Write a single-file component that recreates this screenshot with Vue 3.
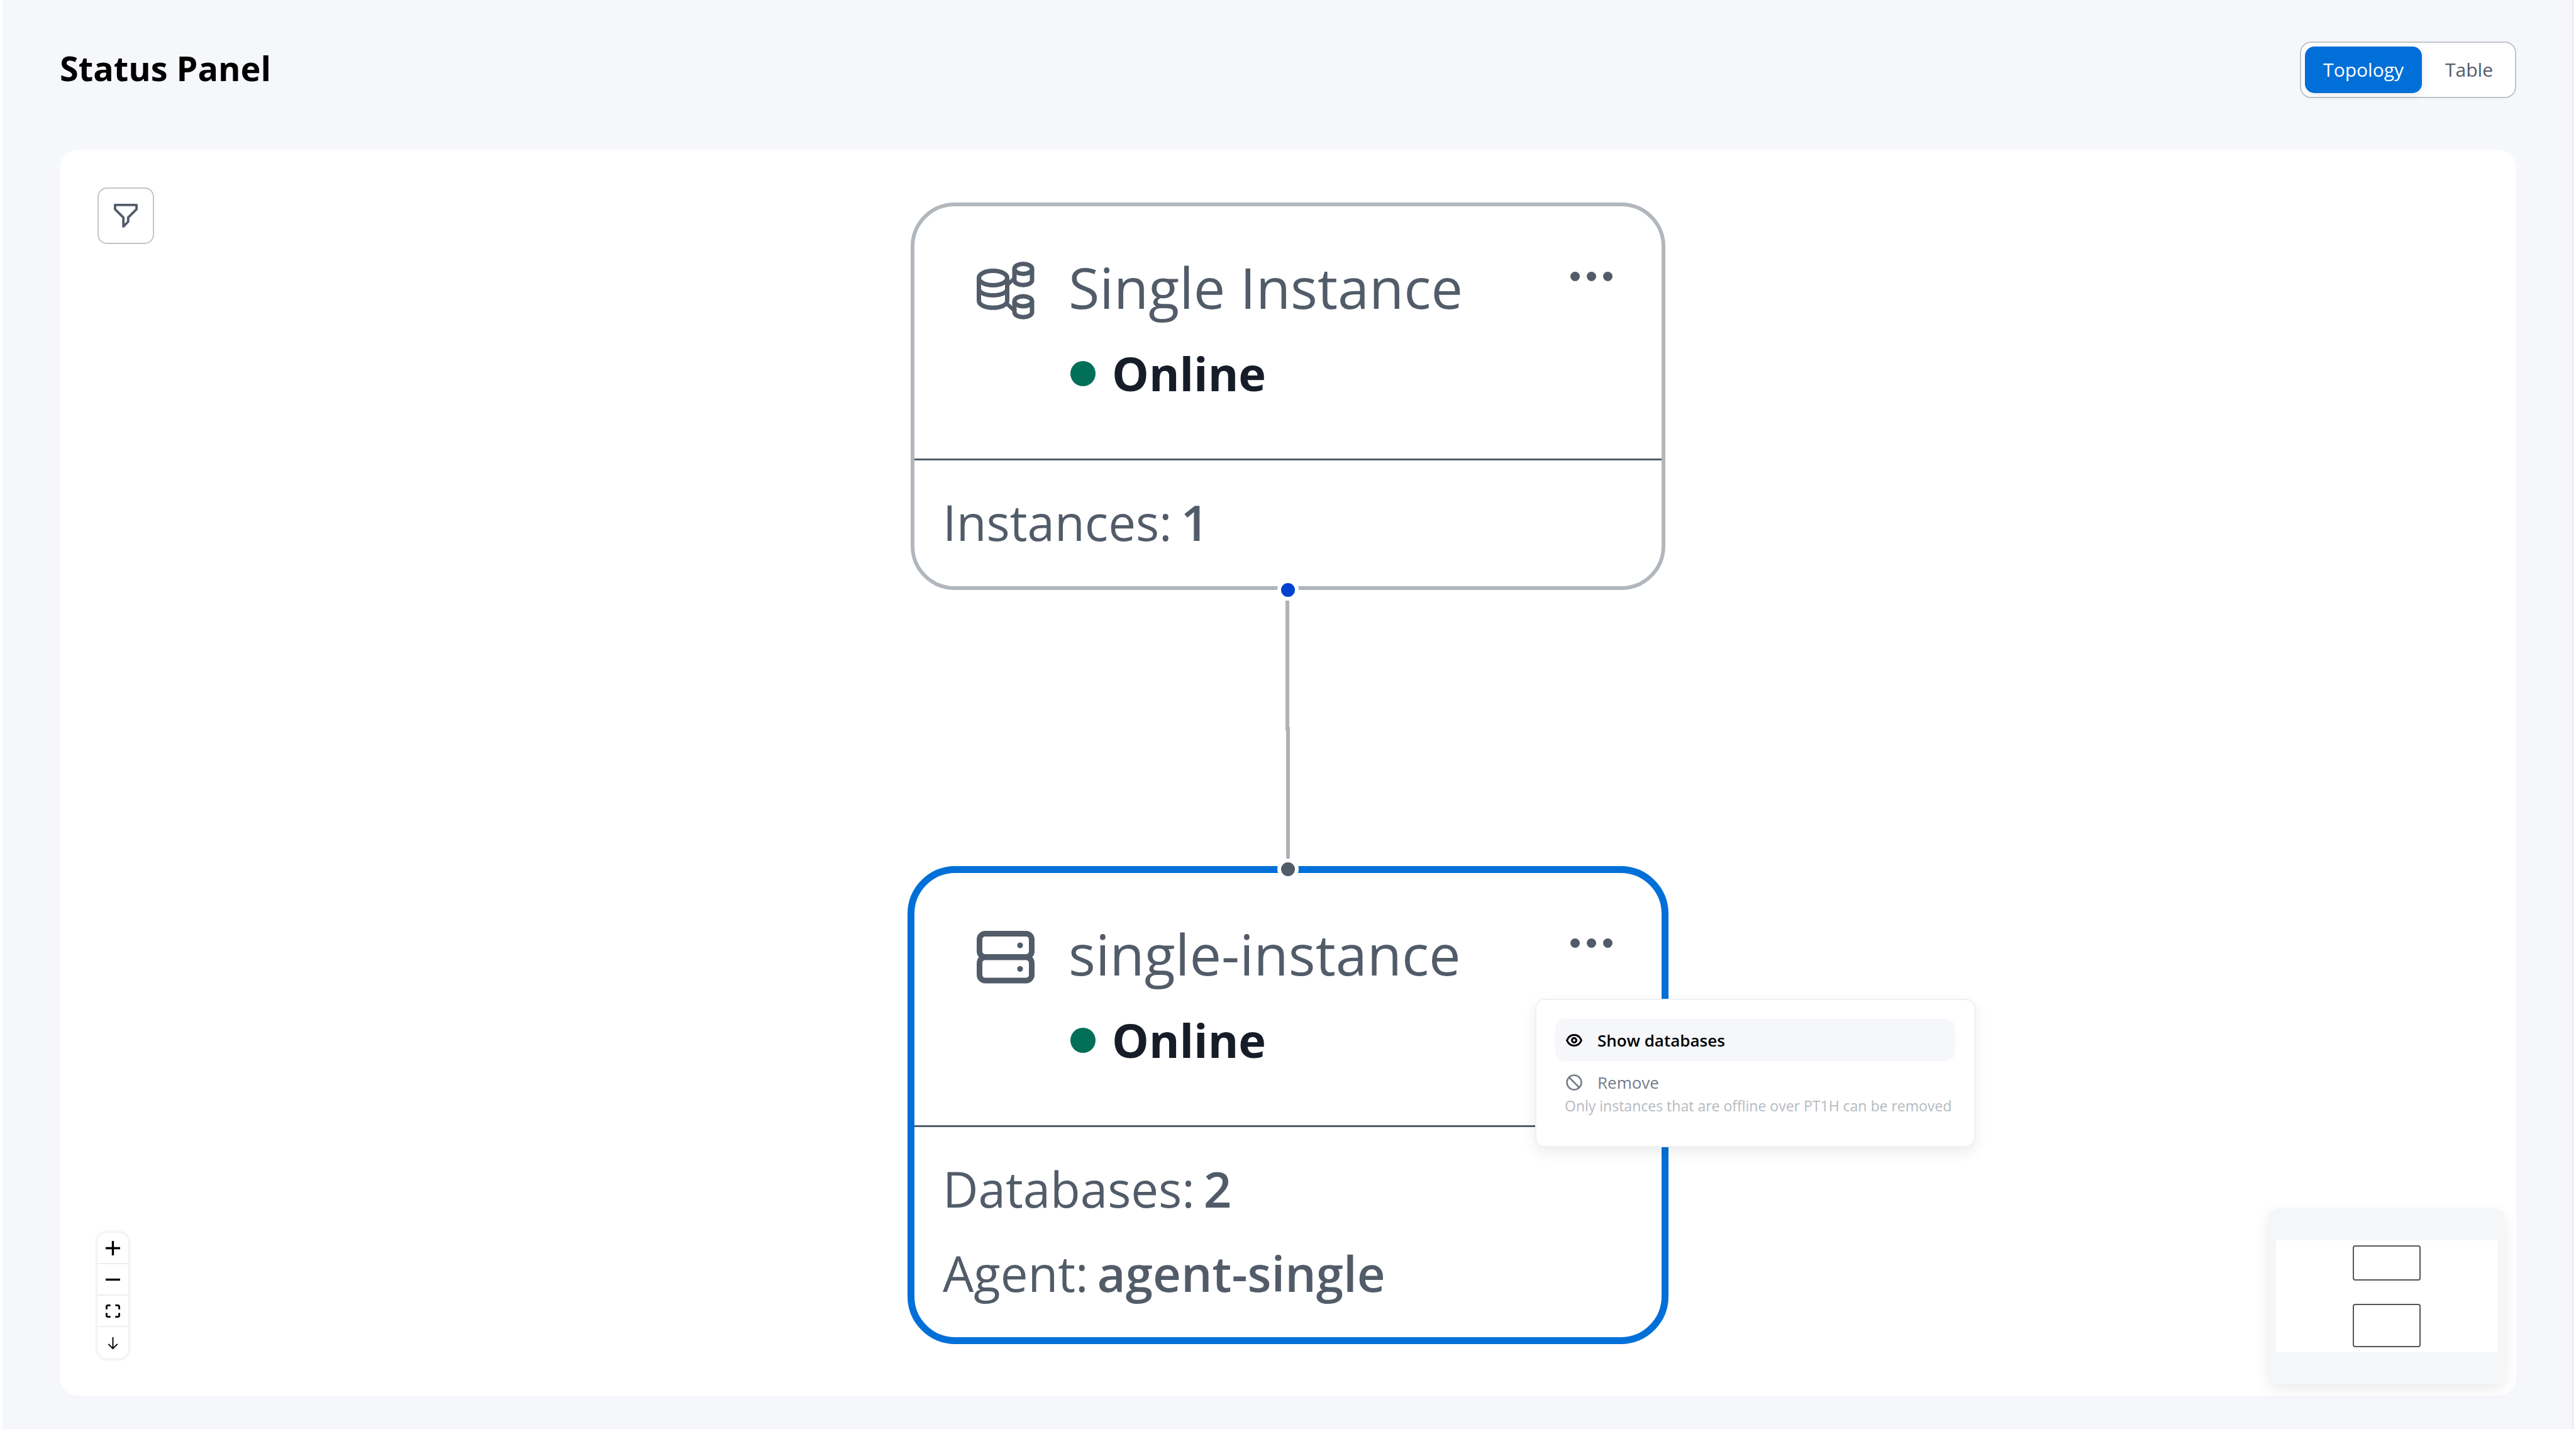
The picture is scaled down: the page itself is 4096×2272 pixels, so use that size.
<script setup>
import { ref } from 'vue'

const view = ref('topology')
const views = [
  { id: 'topology', label: 'Topology' },
  { id: 'table', label: 'Table' },
]

const nodes = [
  {
    id: 'group',
    kind: 'cluster',
    title: 'Single Instance',
    status: 'Online',
    selected: false,
    menuOpen: false,
    details: [{ label: 'Instances:', value: '1' }],
  },
  {
    id: 'instance',
    kind: 'server',
    title: 'single-instance',
    status: 'Online',
    selected: true,
    menuOpen: true,
    details: [
      { label: 'Databases:', value: '2' },
      { label: 'Agent:', value: 'agent-single' },
    ],
  },
]
</script>

<template>
  <div class="page">
    <header class="page-header">
      <h1 class="page-title">Status Panel</h1>
      <div class="toggle" role="group" aria-label="View">
        <button
          v-for="v in views"
          :key="v.id"
          type="button"
          class="toggle-option"
          :class="{ active: view === v.id }"
          @click="view = v.id"
        >{{ v.label }}</button>
      </div>
    </header>

    <main class="panel">
      <button type="button" class="filter-button" aria-label="Filter">
        <svg class="filter-icon" viewBox="0 0 40 40" fill="none" stroke="currentColor" stroke-width="4" stroke-linejoin="round">
          <path d="M2 2H38V9L24 23V30L16 38V23L2 9Z" />
        </svg>
      </button>

      <div class="graph">
        <template v-for="(node, index) in nodes" :key="node.id">
          <svg v-if="index > 0" class="edge" viewBox="0 0 34 444" fill="none" stroke="#b1b1b7" stroke-width="6">
            <path d="M16 0V221H17V444" />
          </svg>
          <article class="node" :class="{ selected: node.selected }">
            <div class="node-head">
              <svg v-if="node.kind === 'cluster'" class="node-icon" viewBox="0 0 92 92" fill="none" stroke="currentColor" stroke-width="7">
                <ellipse cx="26" cy="26" rx="22.500" ry="11.500" />
                <path d="M3.500 26V62C3.500 77 48.500 77 48.500 62V26" />
                <path d="M3.500 43C3.500 57 48.500 57 48.500 43" />
                <ellipse cx="74" cy="11.500" rx="14" ry="8" />
                <path d="M60 11.500V29C60 40 88 40 88 29V11.500" />
                <ellipse cx="74" cy="63" rx="14" ry="8" />
                <path d="M60 63V80C60 91 88 91 88 80V63" />
                <path d="M49 37L60 26M47 66L60 78" stroke-width="6" />
              </svg>
              <svg v-else class="node-icon" viewBox="0 0 92 92" fill="none" stroke="currentColor" stroke-width="9">
                <rect x="4.500" y="8.500" width="83" height="37" rx="9" />
                <rect x="4.500" y="46" width="83" height="37" rx="9" />
                <circle cx="69" cy="27" r="4.600" fill="currentColor" stroke="none" />
                <circle cx="69" cy="64.500" r="4.600" fill="currentColor" stroke="none" />
              </svg>
              <div class="node-main">
                <h2 class="node-title">{{ node.title }}</h2>
                <p class="node-status"><span class="status-dot"></span>{{ node.status }}</p>
              </div>
              <button type="button" class="node-more" aria-label="Actions">
                <span></span><span></span><span></span>
              </button>
            </div>
            <dl class="node-details">
              <div v-for="d in node.details" :key="d.label" class="detail">
                <dt>{{ d.label }}</dt>
                <dd>{{ d.value }}</dd>
              </div>
            </dl>

            <i v-if="index < nodes.length - 1" class="handle source"></i>
            <i v-if="index > 0" class="handle target"></i>

            <div v-if="node.menuOpen" class="menu">
              <button type="button" class="menu-item highlighted">
                <svg class="menu-icon" viewBox="0 0 26 26" fill="none" stroke="currentColor" stroke-width="3">
                  <path d="M1.500 13C4 7 8 4.500 13 4.500S22 7 24.500 13C22 19 18 21.500 13 21.500S4 19 1.500 13Z" stroke-linejoin="round" />
                  <circle cx="13" cy="13" r="3.500" />
                </svg>
                <span>Show databases</span>
              </button>
              <button type="button" class="menu-item disabled" disabled>
                <svg class="menu-icon" viewBox="0 0 26 26" fill="none" stroke="currentColor" stroke-width="2.500">
                  <circle cx="13" cy="13" r="11.500" />
                  <path d="M5 5L21 21" />
                </svg>
                <span>Remove</span>
              </button>
              <p class="menu-hint">Only instances that are offline over PT1H can be removed</p>
            </div>
          </article>
        </template>
      </div>

      <div class="controls">
        <button type="button" aria-label="Zoom in">
          <svg viewBox="0 0 24 24" fill="none" stroke="currentColor" stroke-width="3.500"><path d="M12 0V24M0 12H24" /></svg>
        </button>
        <button type="button" aria-label="Zoom out">
          <svg viewBox="0 0 24 24" fill="none" stroke="currentColor" stroke-width="3.500"><path d="M0 12H24" /></svg>
        </button>
        <button type="button" aria-label="Fit view">
          <svg viewBox="0 0 24 24" fill="none" stroke="currentColor" stroke-width="3"><path d="M8 2.500H4Q1.500 2.500 1.500 5V9M16 2.500H20Q22.500 2.500 22.500 5V9M22.500 15V19Q22.500 21.500 20 21.500H16M8 21.500H4Q1.500 21.500 1.500 19V15" /></svg>
        </button>
        <button type="button" aria-label="Change layout">
          <svg viewBox="0 0 24 24" fill="none" stroke="currentColor" stroke-width="2"><path d="M12 2V21M4.500 13.500L12 21L19.500 13.500" /></svg>
        </button>
      </div>

      <div class="minimap">
        <div class="minimap-view">
          <i class="mini-node"></i>
          <i class="mini-node tall"></i>
        </div>
      </div>
    </main>
  </div>
</template>

<style>
body {
  margin: 0;
  background: #ffffff;
}
</style>

<style scoped>
.page {
  box-sizing: border-box;
  min-height: 100vh;
  margin: 0 4px;
  padding: 66px 89px 53px 91px;
  border-right: 2px solid #e8e8ea;
  background: #f5f7fb;
  color: #525c69;
  font-family: "Open Sans", sans-serif;
  display: flex;
  flex-direction: column;
  gap: 82px;
}

button {
  margin: 0;
  padding: 0;
  border: 0;
  background: none;
  color: inherit;
  font: inherit;
  cursor: pointer;
}

.page-header {
  display: flex;
  align-items: flex-start;
  justify-content: space-between;
}

.page-title {
  margin: 0;
  color: #000000;
  font-size: 54px;
  line-height: 84px;
  font-weight: 700;
}

.toggle {
  box-sizing: border-box;
  height: 90px;
  display: flex;
  gap: 8px;
  padding: 6px;
  border: 2px solid #c1c5cb;
  border-radius: 18px;
  background: #ffffff;
}

.toggle-option {
  padding: 0 29px;
  border-radius: 15px;
  font-size: 30px;
  line-height: 40px;
}

.toggle-option.active {
  background: #0070d8;
  color: #ffffff;
  box-shadow: 2px 4px 14px rgba(0, 0, 0, 0.08);
}

.panel {
  position: relative;
  flex: 1;
  border-radius: 30px;
  background: #ffffff;
}

.filter-button {
  position: absolute;
  top: 60px;
  left: 60px;
  box-sizing: border-box;
  width: 90px;
  height: 90px;
  display: flex;
  align-items: center;
  justify-content: center;
  border: 2px solid #c1c5cb;
  border-radius: 15px;
}

.filter-icon {
  width: 38px;
  height: 38px;
}

.graph {
  padding: 84px 0 78px;
  display: flex;
  flex-direction: column;
  align-items: center;
}

.edge {
  width: 34px;
  height: 444px;
  margin-bottom: -5px;
}

.node {
  position: relative;
  width: 1188px;
  border: 6px solid #b1b7bd;
  border-radius: 70px;
  background: #ffffff;
}

.node.selected {
  border: 11px solid #0070d8;
  border-radius: 76px;
}

.node-head {
  box-sizing: border-box;
  height: 404px;
  display: flex;
  align-items: flex-start;
  padding: 68px 78px 0 99px;
  border-bottom: 3px solid #525c69;
}

.node-icon {
  flex: none;
  width: 92px;
  height: 92px;
  margin-top: 20px;
}

.node-main {
  flex: 1;
  margin-left: 54px;
}

.node-title {
  margin: 0;
  font-size: 90px;
  line-height: 120px;
  font-weight: 400;
}

.node-status {
  margin: 0;
  display: flex;
  align-items: center;
  gap: 26px;
  color: #161d28;
  font-size: 74px;
  line-height: 156px;
  font-weight: 700;
}

.status-dot {
  width: 40px;
  height: 40px;
  margin-left: 3px;
  border-radius: 50%;
  background: #026f58;
}

.node-more {
  display: flex;
  gap: 11px;
  padding: 36px 0;
}

.node-more span {
  width: 15px;
  height: 15px;
  border-radius: 50%;
  background: currentColor;
}

.node-details {
  margin: 0;
  padding: 31px 45px 35px;
}

.detail {
  display: flex;
  gap: 14px;
  font-size: 78px;
  line-height: 134px;
}

.detail dt {
  font-weight: 400;
}

.detail dd {
  margin: 0;
  font-weight: 600;
}

.handle {
  position: absolute;
  left: 50%;
  width: 22px;
  height: 22px;
  border: 6px solid #ffffff;
  border-radius: 50%;
  transform: translateX(-50%);
}

.handle.source {
  bottom: -23px;
  background: #0041d0;
}

.handle.target {
  top: -23px;
  background: #525c69;
}

.menu {
  position: absolute;
  top: 200px;
  left: 987px;
  box-sizing: border-box;
  width: 700px;
  height: 236px;
  padding: 30px;
  border: 2px solid #edf1f7;
  border-radius: 15px;
  background: #ffffff;
  box-shadow: 0 8px 22px rgba(0, 0, 0, 0.08);
}

.menu-item {
  width: 100%;
  height: 67px;
  display: flex;
  align-items: center;
  gap: 24px;
  padding: 0 17px;
  border-radius: 15px;
  font-size: 26px;
  line-height: 36px;
}

.menu-item.highlighted {
  background: #f5f7fb;
  color: #000000;
  font-weight: 600;
}

.menu-item.disabled {
  color: #737c88;
}

.menu-icon {
  width: 26px;
  height: 26px;
}

.menu-hint {
  margin: -12px 0 0;
  padding: 0 15px;
  color: #b5bac1;
  font-size: 23px;
  line-height: 32px;
  white-space: nowrap;
}

.controls {
  position: absolute;
  left: 60px;
  bottom: 59px;
  width: 49px;
  display: flex;
  flex-direction: column;
  border-radius: 15px;
  background: #ffffff;
  color: #000000;
  box-shadow: 0 0 4px 2px rgba(0, 0, 0, 0.08);
}

.controls button {
  box-sizing: border-box;
  height: 50px;
  display: flex;
  align-items: center;
  justify-content: center;
  border-bottom: 2px solid #eeeeee;
}

.controls button:last-child {
  border-bottom: 0;
}

.controls svg {
  width: 23px;
  height: 23px;
}

.minimap {
  position: absolute;
  right: 18px;
  bottom: 18px;
  box-sizing: border-box;
  width: 376px;
  padding: 51px 12px;
  border-radius: 16px;
  background: #f4f6f8;
  box-shadow: 0 8px 22px rgba(0, 0, 0, 0.08);
}

.minimap-view {
  box-sizing: border-box;
  height: 178px;
  padding: 8px 0;
  display: flex;
  flex-direction: column;
  align-items: center;
  justify-content: space-between;
  background: #ffffff;
}

.mini-node {
  box-sizing: border-box;
  width: 108px;
  height: 56px;
  border: 2px solid #555555;
  border-radius: 4px;
}

.mini-node.tall {
  height: 69px;
}
</style>
